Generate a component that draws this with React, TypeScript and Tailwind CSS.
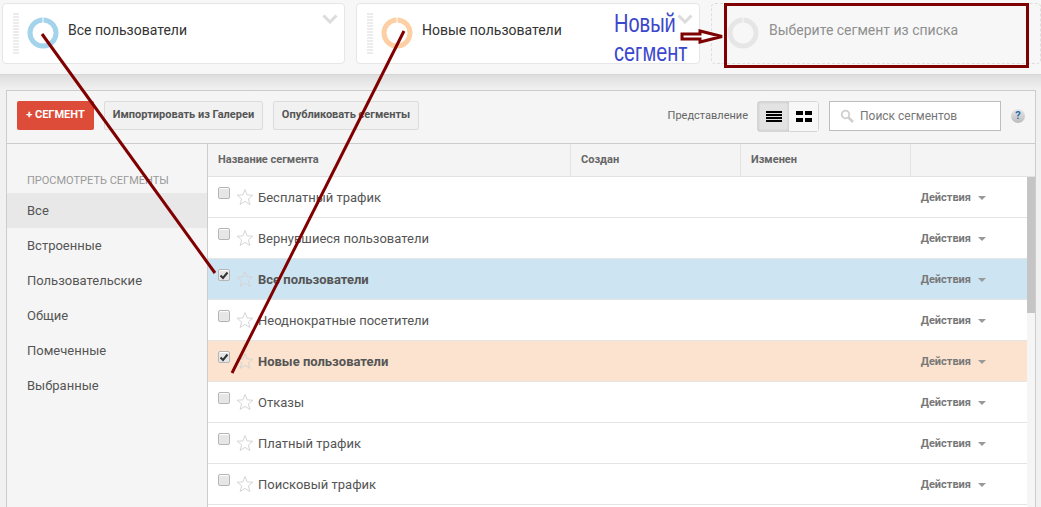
import React from 'react';

const sidebarItems = ['Все', 'Встроенные', 'Пользовательские', 'Общие', 'Помеченные', 'Выбранные'];

interface Segment {
    name: string;
    checked?: boolean;
    rowClass?: string;
}

const segments: Segment[] = [
    { name: 'Бесплатный трафик' },
    { name: 'Вернувшиеся пользователи' },
    { name: 'Все пользователи', checked: true, rowClass: 'bg-[#cde4f2]' },
    { name: 'Неоднократные посетители' },
    { name: 'Новые пользователи', checked: true, rowClass: 'bg-[#fbe3cf]' },
    { name: 'Отказы' },
    { name: 'Платный трафик' },
    { name: 'Поисковый трафик' },
];

const Donut = ({ color, hole = '#ffffff' }: { color: string; hole?: string }) => (
    <svg width="32" height="32" viewBox="0 0 32 32" className="mb-[2px] shrink-0">
        <circle cx="16" cy="16" r="13" fill={hole} stroke={color} strokeWidth="5" />
        <rect x="15.5" y="0" width="1" height="6" fill={hole} />
    </svg>
);

const Grip = () => (
    <div className="flex h-[42px] w-[6px] shrink-0 flex-col gap-px">
        {Array.from({ length: 14 }).map((_, i) => (
            <div key={i} className="h-[2px] w-[6px] bg-[#ececec]" />
        ))}
    </div>
);

const Chevron = () => (
    <svg width="16" height="10" viewBox="0 0 16 10" className="absolute right-[6px] top-[10px]">
        <path d="M1.5 1.5 L8 8 L14.500 1.500" fill="none" stroke="#dcdcdc" strokeWidth="3" />
    </svg>
);

const SegmentCard = ({ title, color, className }: { title: string; color: string; className: string }) => (
    <div className={`relative flex h-[61px] items-center rounded-[4px] border border-[#e6e6e6] bg-white pl-[10px] ${className}`}>
        <Grip />
        <div className="ml-[8px] mr-[9px] flex">
            <Donut color={color} />
        </div>
        <span className="mb-[6px] text-[14px] text-[#333]">{title}</span>
        <Chevron />
    </div>
);

const Star = () => (
    <svg width="18" height="18" viewBox="0 0 24 24" className="shrink-0">
        <path
            d="M12 2 L14.800 9.200 L22.500 9.600 L16.500 14.500 L18.500 22 L12 17.800 L5.500 22 L7.500 14.500 L1.500 9.600 L9.200 9.200 Z"
            fill="none"
            stroke="#d4d4d4"
            strokeWidth="1.300"
        />
    </svg>
);

const Checkbox = ({ checked }: { checked?: boolean }) => (
    <div className="mb-[8px] flex h-[12px] w-[12px] shrink-0 items-center justify-center rounded-[2px] border border-[#b5b5b5] bg-[#e6e6e6] shadow-[inset_0_1px_1px_#fff]">
        {checked && (
            <svg width="10" height="9" viewBox="0 0 10 9">
                <path d="M1.500 4.500 L4 7 L8.500 1.500" fill="none" stroke="#333" strokeWidth="2" />
            </svg>
        )}
    </div>
);

const GrayButton = ({ label, width }: { label: string; width: string }) => (
    <button className={`mb-[1px] flex h-[29px] items-center justify-center rounded-[2px] border border-[#dcdcdc] bg-[#f1f1f1] text-[11px] font-bold text-[#555] ${width}`}>
        {label}
    </button>
);

const Annotations = () => (
    <svg width="1041" height="507" viewBox="0 0 1041 507" className="pointer-events-none absolute left-0 top-0">
        <line x1="42" y1="34" x2="215" y2="273" stroke="#800000" strokeWidth="3" />
        <line x1="404" y1="31" x2="232" y2="373" stroke="#800000" strokeWidth="3" />
        <rect x="725.500" y="4.500" width="302" height="62" fill="none" stroke="#7f0000" strokeWidth="3" />
        <path d="M682 34 H700 V31 L722 36.500 L700 42 V39 H682 Z" fill="#fff" stroke="#7f0000" strokeWidth="3" />
    </svg>
);

export default function App() {
    return (
        <div className="relative h-[507px] w-[1041px] overflow-hidden bg-[#f1f1f1] font-['Roboto',sans-serif]">
            {/* segment bar */}
            <div className="flex h-[75px] gap-[11px] border-b border-[#d6d6d6] bg-[#f7f7f7] pl-[2px] pt-[3px]">
                <SegmentCard title="Все пользователи" color="#a3d4ec" className="w-[343px]" />
                <SegmentCard title="Новые пользователи" color="#fdcfa4" className="w-[344px]" />
                <div className="flex h-[61px] flex-1 items-center rounded-[4px] border border-dashed border-[#dedede] pl-[15px]">
                    <Donut color="#e6e6e6" hole="#f7f7f7" />
                    <span className="mb-[6px] ml-[10px] text-[14px] text-[#8f8f8f]">Выберите сегмент из списка</span>
                </div>
            </div>
            <div className="h-[15px] bg-gradient-to-b from-[#dedede] to-[#f1f1f1]" />

            {/* panel */}
            <div className="ml-[6px] h-[440px] w-[1030px] border border-[#cccccc] bg-[#f5f5f5]">
                <div className="flex h-[53px] items-center border-b border-[#cccccc] pb-[2px] pl-[10px] pr-[10px]">
                    <button className="mb-[1px] mr-[10px] flex h-[29px] w-[77px] items-center justify-center rounded-[2px] bg-[#dd4b39] text-[11px] font-bold text-white">
                        + СЕГМЕНТ
                    </button>
                    <GrayButton label="Импортировать из Галереи" width="w-[159px] mr-[10px]" />
                    <GrayButton label="Опубликовать сегменты" width="w-[146px]" />
                    <span className="ml-auto mr-[9px] mt-[1px] text-[11px] text-[#666]">Представление</span>
                    <div className="flex h-[31px] w-[62px] rounded-[3px] border border-[#d6d6d6]">
                        <div className="flex w-[31px] items-center justify-center bg-[#e3e3e3] shadow-[inset_0_0_3px_#bbb]">
                            <div className="flex w-[16px] flex-col gap-[1px]">
                                <div className="h-[2px] bg-black" />
                                <div className="h-[2px] bg-black" />
                                <div className="h-[2px] bg-black" />
                                <div className="h-[2px] bg-black" />
                            </div>
                        </div>
                        <div className="grid flex-1 grid-cols-[7px_7px] content-center justify-center gap-x-[2px] gap-y-[3px] bg-[#f7f7f7]">
                            <div className="h-[4px] bg-black" />
                            <div className="h-[4px] bg-black" />
                            <div className="h-[4px] bg-black" />
                            <div className="h-[4px] bg-black" />
                        </div>
                    </div>
                    <div className="ml-[10px] flex h-[30px] w-[172px] items-center border border-[#bdbdbd] bg-white pl-[10px]">
                        <svg width="14" height="14" viewBox="0 0 14 14">
                            <circle cx="5.500" cy="5.500" r="3.800" fill="none" stroke="#cfcfcf" strokeWidth="1.800" />
                            <line x1="8.500" y1="8.500" x2="13" y2="13" stroke="#cfcfcf" strokeWidth="2.500" />
                        </svg>
                        <span className="ml-[6px] text-[12px] text-[#777]">Поиск сегментов</span>
                    </div>
                    <div className="ml-[10px] flex h-[14px] w-[14px] items-center justify-center rounded-full bg-gradient-to-b from-[#e8e8e8] to-[#bcbcbc] text-[11px] font-bold text-[#2a6db0]">
                        ?
                    </div>
                </div>

                <div className="flex h-[385px]">
                    <div className="w-[201px] shrink-0 border-r border-[#cccccc] pt-[30px]">
                        <div className="mb-[6px] pl-[20px] text-[11px] leading-[13px] text-[#999]">ПРОСМОТРЕТЬ СЕГМЕНТЫ</div>
                        {sidebarItems.map((item, i) => (
                            <div
                                key={item}
                                className={`flex h-[35px] items-center pl-[20px] text-[13px] text-[#555] ${i === 0 ? 'bg-[#e8e8e8]' : ''}`}
                            >
                                {item}
                            </div>
                        ))}
                    </div>

                    <div className="flex min-w-0 flex-1 flex-col">
                        <div className="flex h-[33px] shrink-0 items-center border-b border-[#e2e2e2] bg-[#f4f4f4] text-[11px] font-bold text-[#666]">
                            <div className="flex h-full w-[363px] items-center border-r border-[#e2e2e2] pl-[10px]">Название сегмента</div>
                            <div className="flex h-full w-[170px] items-center border-r border-[#e2e2e2] pl-[10px]">Создан</div>
                            <div className="flex h-full w-[170px] items-center border-r border-[#e2e2e2] pl-[10px]">Изменен</div>
                        </div>
                        <div className="flex min-h-0 flex-1">
                            <div className="min-w-0 flex-1 overflow-hidden bg-white">
                                {segments.map((s) => (
                                    <div
                                        key={s.name}
                                        className={`flex h-[41px] items-center border-b border-[#e4e4e4] pl-[10px] ${s.rowClass ?? ''}`}
                                    >
                                        <Checkbox checked={s.checked} />
                                        <div className="ml-[6px] mr-[4px] flex">
                                            <Star />
                                        </div>
                                        <span className={`mt-[2px] text-[13px] text-[#555] ${s.checked ? 'font-bold text-[#444]' : ''}`}>{s.name}</span>
                                        <div className="ml-auto mr-[41px] mt-[2px] flex items-center">
                                            <span className="text-[11px] font-bold text-[#777]">Действия</span>
                                            <div className="ml-[7px] h-0 w-0 border-x-[4px] border-t-[4px] border-x-transparent border-t-[#999]" />
                                        </div>
                                    </div>
                                ))}
                            </div>
                            <div className="w-[8px] shrink-0 bg-[#f5f5f5]">
                                <div className="h-[136px] bg-[#c5c5c5]" />
                            </div>
                        </div>
                    </div>
                </div>
            </div>

            <div className="absolute left-[614px] top-[9px] w-[110px] origin-left scale-x-[0.8] font-['Liberation_Sans',sans-serif] text-[25px] leading-[29px] text-[#3c48cc]">
                Новый сегмент
            </div>
            <Annotations />
        </div>
    );
}
